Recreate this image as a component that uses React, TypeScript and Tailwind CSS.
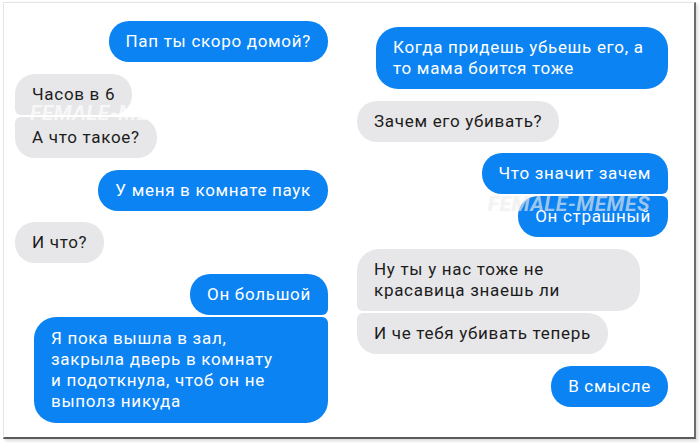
import React from "react";

type Msg = {
  text: string[];
  me: boolean;
  round?: string;
  mt: string;
  w?: string;
};

const left: Msg[] = [
  { text: ["Пап ты скоро домой?"], me: true, mt: "mt-[18px]" },
  { text: ["Часов в 6"], me: false, round: "rounded-bl-[6px]", mt: "mt-[12px]" },
  { text: ["А что такое?"], me: false, round: "rounded-tl-[6px]", mt: "mt-[2px]" },
  { text: ["У меня в комнате паук"], me: true, mt: "mt-[12px]" },
  { text: ["И что?"], me: false, mt: "mt-[11px]" },
  { text: ["Он большой"], me: true, round: "rounded-br-[6px]", mt: "mt-[11px]" },
  {
    text: [
      "Я пока вышла в зал,",
      "закрыла дверь в комнату",
      "и подоткнула, чтоб он не",
      "выполз никуда",
    ],
    me: true,
    round: "rounded-tr-[6px]",
    mt: "mt-[2px]",
    w: "w-[294px] py-[11px]",
  },
];

const right: Msg[] = [
  {
    text: ["Когда придешь убьешь его, а", "то мама боится тоже"],
    me: true,
    mt: "mt-[24px]",
    w: "w-[292px]",
  },
  { text: ["Зачем его убивать?"], me: false, mt: "mt-[12px]" },
  { text: ["Что значит зачем"], me: true, round: "rounded-br-[6px]", mt: "mt-[11px]" },
  { text: ["Он страшный"], me: true, round: "rounded-tr-[6px]", mt: "mt-[2px]" },
  {
    text: ["Ну ты у нас тоже не", "красавица знаешь ли"],
    me: false,
    round: "rounded-bl-[6px]",
    mt: "mt-[12px]",
    w: "w-[283px]",
  },
  { text: ["И че тебя убивать теперь"], me: false, round: "rounded-tl-[6px]", mt: "mt-[2px]" },
  { text: ["В смысле"], me: true, mt: "mt-[12px]" },
];

function Bubble({ m }: { m: Msg }) {
  const color = m.me
    ? "self-end bg-[#0b83f3] text-white"
    : "self-start bg-[#e7e7e9] text-[#1c1c1c]";
  const single = m.text.length === 1;
  return (
    <div
      className={`${m.mt} ${color} ${single ? "rounded-[20px]" : "rounded-[22px]"} ${
        m.round ?? ""
      } ${m.w ?? ""} px-[17px] py-[10px] text-[17px] leading-[21px] tracking-[0.7px]`}
    >
      {m.text.map((t, i) => (
        <div key={i} className="whitespace-nowrap">
          {t}
        </div>
      ))}
    </div>
  );
}

export default function App() {
  return (
    <div
      className="w-[700px] h-[443px] bg-white overflow-hidden"
      style={{ fontFamily: "Roboto, 'Noto Sans', sans-serif" }}
    >
      <div className="relative ml-[3px] mt-[2px] w-[693px] h-[437px] border-t border-l border-t-[#e4e4e4] border-l-[#e4e4e4] border-r-2 border-b-2 border-r-[#6d6d6d] border-b-[#5a5a5a] bg-white shadow-[2px_2px_3px_rgba(0,0,0,0.15)]">
        <div className="grid grid-cols-[313px_311px] gap-x-[29px] pl-[11px]">
          <div className="flex flex-col">
            {left.map((m, i) => (
              <Bubble key={i} m={m} />
            ))}
          </div>
          <div className="flex flex-col">
            {right.map((m, i) => (
              <Bubble key={i} m={m} />
            ))}
          </div>
        </div>
        <div className="absolute left-[26px] top-[95px] text-[21px] font-bold italic tracking-[0.5px] text-white/70">
          FEMALE-MEMES
        </div>
        <div className="absolute left-[484px] top-[186px] text-[21px] font-bold italic tracking-[0.5px] text-white/60 [text-shadow:0_0_1px_rgba(0,0,0,0.12)]">
          FEMALE-MEMES
        </div>
      </div>
    </div>
  );
}
